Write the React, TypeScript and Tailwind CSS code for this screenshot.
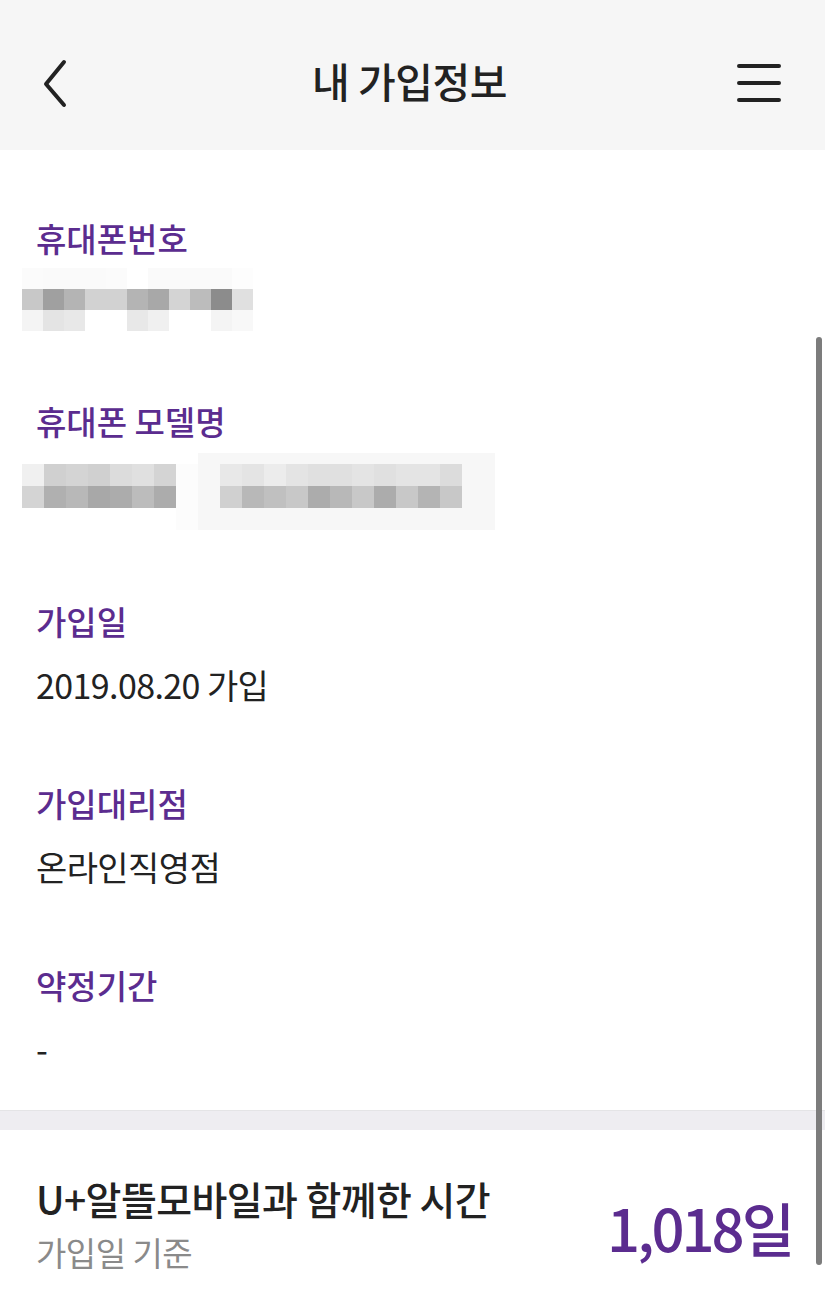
import React from "react";

const PURPLE = "text-[#5b2c8f]";

const phoneRows: string[][] = [
  ["#fbfbfb", "#fafafa", "#fafafa", "#fafafa", "#fbfbfb", "#ffffff", "#fafafa", "#fafafa", "#fafafa", "#fafafa", "#fdfdfd"],
  ["#c8c8c8", "#a0a0a0", "#b4b4b4", "#d2d2d2", "#d2d2d2", "#b4b4b4", "#a8a8a8", "#d4d4d4", "#bcbcbc", "#8c8c8c", "#e0e0e0"],
  ["#f4f4f4", "#e4e4e4", "#e8e8e8", "#ffffff", "#ffffff", "#e8e8e8", "#f0f0f0", "#ffffff", "#ffffff", "#f4f4f4", "#f8f8f8"],
];

const modelA: string[][] = [
  ["#f0f0f0", "#d0d0d0", "#d4d4d4", "#d0d0d0", "#dcdcdc", "#e0e0e0", "#d4d4d4"],
  ["#d4d4d4", "#b0b0b0", "#b8b8b8", "#a8a8a8", "#acacac", "#bcbcbc", "#acacac"],
];
const modelB: string[][] = [
  ["#e8e8e8", "#e4e4e4", "#ececec", "#e4e4e4", "#e0e0e0", "#e0e0e0", "#e4e4e4", "#e0e0e0", "#e4e4e4", "#e4e4e4", "#dcdcdc"],
  ["#d0d0d0", "#b8b8b8", "#c0c0c0", "#c8c8c8", "#acacac", "#b8b8b8", "#c8c8c8", "#acacac", "#c8c8c8", "#b4b4b4", "#c8c8c8"],
];

function Pixels({ rows, cell = 22 }: { rows: string[][]; cell?: number }) {
  return (
    <div className="flex flex-col">
      {rows.map((r, i) => (
        <div key={i} className="flex">
          {r.map((c, j) => (
            <div key={j} style={{ width: cell, height: cell, background: c }} />
          ))}
        </div>
      ))}
    </div>
  );
}

const LABEL = `${PURPLE} text-[33px] leading-[44px] font-medium`;

function Item({ label, children }: { label: string; children: React.ReactNode }) {
  return (
    <div className="py-[37px] px-[36px]">
      <div className={LABEL}>{label}</div>
      <div className="mt-[20px] text-[34px] leading-[44px] text-[#222] tracking-[-0.6px]">{children}</div>
    </div>
  );
}

export default function App() {
  return (
    <div
      className="relative w-[825px] h-[1303px] bg-white overflow-hidden"
      style={{ fontFamily: '"Noto Sans CJK KR", "Noto Sans", sans-serif' }}
    >
      {/* Header */}
      <div className="h-[150px] bg-[#f6f6f6] flex items-center justify-between px-[40px] pt-[16px]">
        <svg width="34" height="50" viewBox="0 0 34 50" className="ml-[-2px]">
          <path d="M26 4 L8 26 L26 47" fill="none" stroke="#222" strokeWidth="4" strokeLinecap="round" strokeLinejoin="round" />
        </svg>
        <div className="text-[41px] font-medium text-[#222] tracking-[-0.5px] leading-none mt-[-6px] ml-[10px]">내 가입정보</div>
        <svg width="46" height="42" viewBox="0 0 46 42" className="mr-[2px]">
          <path d="M2 4 H42 M2 21 H42 M2 38 H42" stroke="#222" strokeWidth="4" strokeLinecap="round" />
        </svg>
      </div>

      {/* Info list */}
      <div className="pt-[30px] pb-[2px]">
        <div className="pt-[36px] pb-[68px] pl-[36px]">
          <div className={LABEL}>휴대폰번호</div>
          <div className="mt-[8px] ml-[-14px]">
            <Pixels rows={phoneRows} cell={21} />
          </div>
        </div>
        <div className="pb-[38px] pl-[36px]">
          <div className={LABEL}>휴대폰 모델명</div>
          <div className="mt-[10px] ml-[-14px] flex">
            <div className="flex flex-col">
              <div className="h-[11px]" />
              <Pixels rows={modelA} cell={22} />
            </div>
            <div className="w-[22px] bg-[#fcfcfc] mt-[11px]" />
            <div className="bg-[#f7f7f7] pt-[11px] px-[22px] pb-[22px] pr-[33px]">
              <Pixels rows={modelB} cell={22} />
            </div>
          </div>
        </div>
        <div className="mt-[-6px]">
          <Item label="가입일">2019.08.20 가입</Item>
          <Item label="가입대리점">온라인직영점</Item>
          <Item label="약정기간">-</Item>
        </div>
      </div>

      {/* Divider band */}
      <div className="h-[20px] bg-[#eeedf1] border-t border-[#e4e4e6]" />

      {/* Bottom summary */}
      <div className="flex items-center justify-between pl-[36px] pr-[33px] pt-[42px]">
        <div className="flex flex-col">
          <div className="text-[39px] leading-[52px] font-medium text-[#222] tracking-[-0.6px]">U+알뜰모바일과 함께한 시간</div>
          <div className="text-[33px] leading-[44px] text-[#8a8a8a] tracking-[-0.5px] mt-[6px]">가입일 기준</div>
        </div>
        <div className={`${PURPLE} text-[58px] font-medium leading-none tracking-[-3px] mt-[8px]`}>1,018일</div>
      </div>

      {/* Overlay scrollbar */}
      <div className="absolute left-[816px] top-[337px] w-[6px] h-[928px] bg-[#7c7c7c] rounded-full" />
    </div>
  );
}
